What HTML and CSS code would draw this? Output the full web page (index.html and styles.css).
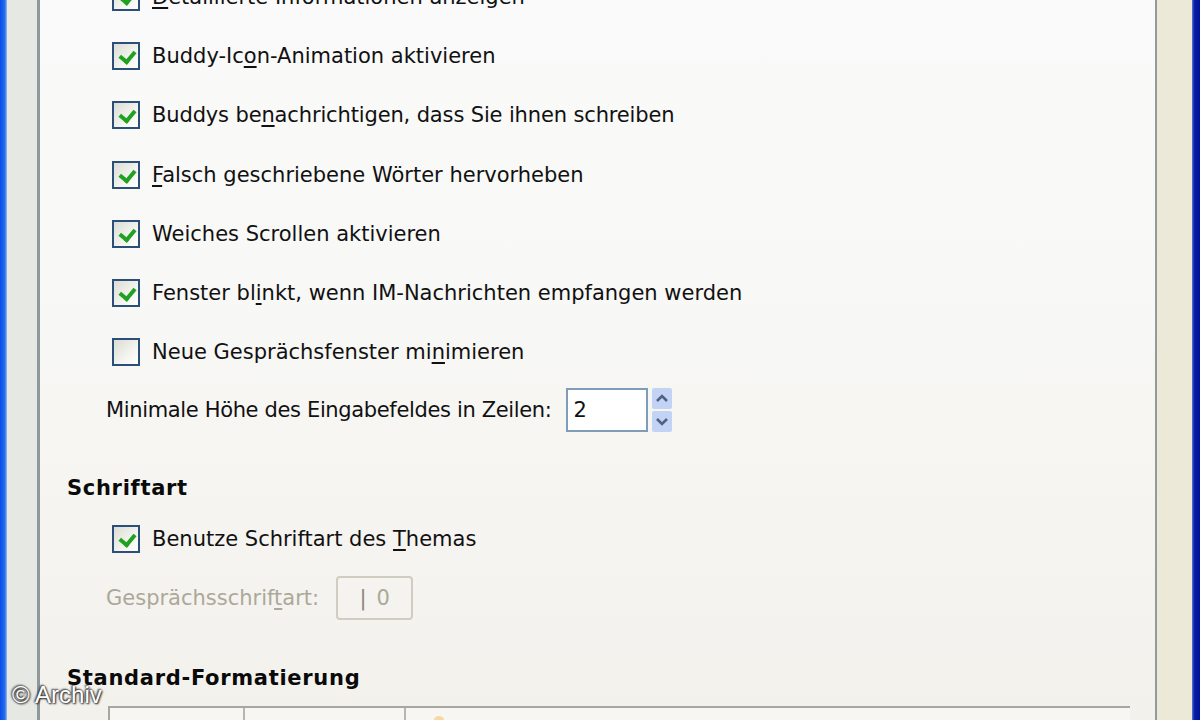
FILE: index.html
```html
<!DOCTYPE html>
<html lang="de">

<head>
    <meta charset="UTF-8">
    <title>Einstellungen - Gespräche</title>
    <link rel="stylesheet" href="styles.css">
</head>

<body>
    <div class="window">
        <div class="frame-left"></div>
        <div class="dialog">
            <div class="panel">
                <div class="opts">
                    <label class="opt"><span class="box checked"></span><span><u>D</u>etaillierte Informationen anzeigen</span></label>
                    <label class="opt"><span class="box checked"></span><span>Buddy-Ic<u>o</u>n-Animation aktivieren</span></label>
                    <label class="opt"><span class="box checked"></span><span class="tight">Buddys be<u>n</u>achrichtigen, dass Sie ihnen schreiben</span></label>
                    <label class="opt"><span class="box checked"></span><span><u>F</u>alsch geschriebene Wörter hervorheben</span></label>
                    <label class="opt"><span class="box checked"></span><span>Weiches Scrollen aktivieren</span></label>
                    <label class="opt"><span class="box checked"></span><span>Fenster bl<u>i</u>nkt, wenn IM-Nachrichten empfangen werden</span></label>
                    <label class="opt"><span class="box"></span><span>Neue Gesprächsfenster mi<u>n</u>imieren</span></label>
                </div>

                <div class="spin-row">
                    <span class="spin-label">Minimale Höhe des Eingabefeldes in Zeilen:</span>
                    <span class="spin-input">2</span>
                    <span class="spin-btns">
                        <svg width="20" height="44" viewBox="0 0 20 44">
                            <rect x="0" y="0" width="20" height="21" rx="2" fill="#c3d3f6"/>
                            <rect x="0" y="23" width="20" height="21" rx="2" fill="#c3d3f6"/>
                            <path d="M5 13 L10 8 L15 13" fill="none" stroke="#4d6185" stroke-width="2.6"/>
                            <path d="M5 31 L10 36 L15 31" fill="none" stroke="#4d6185" stroke-width="2.6"/>
                        </svg>
                    </span>
                </div>

                <h2 class="section section-font">Schriftart</h2>
                <label class="opt opt-font"><span class="box checked"></span><span>Benutze Schriftart des <u>T</u>hemas</span></label>
                <div class="font-row">
                    <span>Gesprächsschrif<u>t</u>art:</span>
                    <span class="font-btn"><span class="bar">|</span>0</span>
                </div>

                <h2 class="section section-format">Standard-Formatierung</h2>
                <div class="format-table">
                    <div class="cell c1"></div>
                    <div class="cell c2"></div>
                    <div class="cell c3"><span class="dot"></span></div>
                </div>
            </div>
        </div>
        <div class="frame-right"></div>
    </div>
    <div class="credit">© Archiv</div>
</body>

</html>
```

FILE: styles.css
```css
* {
    margin: 0;
    padding: 0;
    box-sizing: border-box;
}

body {
    font-family: "DejaVu Sans", Tahoma, sans-serif;
    font-size: 21px;
    color: #111;
    position: relative;
    overflow: hidden;
    background: #0a1a9c;
}

.window {
    display: flex;
    height: 720px;
}

.frame-left {
    width: 7px;
    background: linear-gradient(to right, #0a4be6, #2a6ef0 70%, #9fbde8);
}

.frame-right {
    width: 8px;
    background: linear-gradient(to right, #5a78d0, #0a1fa8 30%, #001296);
}

.dialog {
    flex: 1;
    min-width: 0;
    display: flex;
    background: linear-gradient(to right, #e6e8e4, #ece9d8 25%);
    padding: 0 35px 0 30px;
}

.panel {
    flex: 1;
    min-width: 0;
    border-left: 3px solid #8e999d;
    border-right: 2px solid #919b9c;
    background: linear-gradient(#fafafa, #f8f8f6 40%, #f3f1ec);
    padding-left: 27px;
    overflow: hidden;
}

.opts {
    margin-top: -33px;
    padding-left: 45px;
}

.opt {
    display: flex;
    align-items: center;
    height: 59.3px;
    gap: 12px;
}

.tight {
    letter-spacing: -0.14px;
}

.opt u, .font-row u {
    text-decoration-thickness: 2px;
    text-underline-offset: 3px;
}

.box {
    width: 28px;
    height: 28px;
    border: 2px solid #2b4f78;
    background: linear-gradient(135deg, #dcdcd5, #f4f4f0 60%, #ffffff);
    position: relative;
    flex: none;
}

.box.checked::after {
    content: "";
    position: absolute;
    left: 8px;
    top: 4px;
    width: 7px;
    height: 11px;
    border-right: 4px solid #21a121;
    border-bottom: 4px solid #21a121;
    transform: rotate(40deg);
}

.spin-row {
    display: flex;
    align-items: center;
    margin-top: 6px;
    padding-left: 39px;
    height: 44px;
}

.spin-label {
    letter-spacing: -0.35px;
}

.spin-input {
    width: 82px;
    height: 44px;
    margin-left: 14px;
    border: 2px solid #7f9db9;
    background: #fff;
    padding-left: 6px;
    display: flex;
    align-items: center;
}

.spin-btns {
    margin-left: 4px;
    display: flex;
}

.section {
    font-size: 21px;
    font-weight: bold;
    height: 30px;
    line-height: 30px;
    color: #0a0a0a;
    letter-spacing: 0.7px;
}

.section-font {
    margin-top: 41px;
}

.opt-font {
    margin-top: 6px;
    padding-left: 45px;
}

.font-row {
    display: flex;
    align-items: center;
    height: 44px;
    margin-top: 8px;
    padding-left: 39px;
    color: #aca899;
}

.font-btn {
    width: 77px;
    height: 44px;
    margin-left: 17px;
    border: 2px solid #cfccc0;
    border-radius: 4px;
    display: flex;
    align-items: center;
    justify-content: center;
    gap: 10px;
}

.font-btn .bar {
    color: #8a877b;
}

.section-format {
    margin-top: 43px;
}

.format-table {
    display: flex;
    margin-top: 13px;
    margin-left: 41px;
    width: 1022px;
    height: 20px;
    border-top: 2px solid #a7a6a0;
    border-left: 2px solid #a7a6a0;
    background: #f7f6f2;
}

.cell {
    border-right: 2px solid #b8b6ac;
    height: 100%;
}

.c1 {
    width: 135px;
}

.c2 {
    width: 161px;
}

.c3 {
    flex: 1;
    border-right: none;
    position: relative;
}

.dot {
    position: absolute;
    left: 28px;
    top: 8px;
    width: 10px;
    height: 8px;
    border-radius: 50%;
    background: #f6d9a0;
}

.credit {
    position: absolute;
    left: 12px;
    bottom: 11px;
    font-family: "Liberation Sans", Arial, sans-serif;
    font-size: 24px;
    color: #fff;
    text-shadow: 0 0 2px #333, 1px 1px 2px #222, -1px -1px 2px #444;
}
```
